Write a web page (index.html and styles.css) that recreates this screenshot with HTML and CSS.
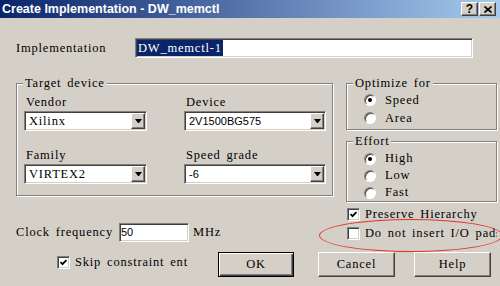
FILE: index.html
```html
<!DOCTYPE html>
<html lang="en">
<head>
  <meta charset="UTF-8">
  <title>Create Implementation - DW_memctl</title>
  <link rel="stylesheet" href="styles.css">
</head>
<body>
  <div class="window">
    <div class="titlebar">
      <span class="title">Create Implementation - DW_memctl</span>
      <div class="caption-buttons">
        <span class="cap-btn raised help-glyph">?</span>
        <span class="cap-btn raised">
          <svg width="8" height="7" viewBox="0 0 8 7"><path d="M0.5 0.5 L7.5 6.5 M7.5 0.5 L0.5 6.5" stroke="#000" stroke-width="1.7" fill="none"/></svg>
        </span>
      </div>
    </div>

    <div class="impl-row">
      <label class="impl-label">Implementation</label>
      <div class="impl-input sunken"><span class="sel">DW_memctl-1</span></div>
    </div>

    <div class="main">
      <div class="left-col">
        <div class="group target">
          <div class="group-title">Target device</div>
          <div class="target-grid">
            <div class="field-block">
              <div class="lbl">Vendor</div>
              <div class="combo sunken"><span class="combo-text">Xilinx</span><span class="drop raised"></span></div>
            </div>
            <div class="field-block">
              <div class="lbl">Device</div>
              <div class="combo sunken"><span class="combo-text sans">2V1500BG575</span><span class="drop raised"></span></div>
            </div>
            <div class="field-block">
              <div class="lbl">Family</div>
              <div class="combo sunken"><span class="combo-text">VIRTEX2</span><span class="drop raised"></span></div>
            </div>
            <div class="field-block">
              <div class="lbl">Speed grade</div>
              <div class="combo sunken"><span class="combo-text sans">-6</span><span class="drop raised"></span></div>
            </div>
          </div>
        </div>

        <div class="clock-row">
          <span class="clock-label">Clock frequency</span>
          <div class="clock-input sunken"><span class="sans">50</span></div>
          <span class="unit">MHz</span>
        </div>
      </div>

      <div class="right-col">
        <div class="group optimize">
          <div class="group-title">Optimize for</div>
          <div class="radio-list">
            <div class="radio-row"><span class="radio checked"></span>Speed</div>
            <div class="radio-row"><span class="radio"></span>Area</div>
          </div>
        </div>

        <div class="group effort">
          <div class="group-title">Effort</div>
          <div class="radio-list">
            <div class="radio-row"><span class="radio checked"></span>High</div>
            <div class="radio-row"><span class="radio"></span>Low</div>
            <div class="radio-row"><span class="radio"></span>Fast</div>
          </div>
        </div>

        <div class="checks">
          <div class="check-row">
            <span class="checkbox sunken">
              <svg width="7" height="7" viewBox="0 0 7 7"><polyline points="0.5,3 2.5,5.2 6.5,1" stroke="#000" stroke-width="1.8" fill="none"/></svg>
            </span>
            <span>Preserve Hierarchy</span>
          </div>
          <div class="check-row">
            <span class="checkbox sunken"></span>
            <span>Do not insert I/O pads</span>
          </div>
        </div>
      </div>
    </div>

    <div class="footer">
      <div class="skip">
        <span class="checkbox sunken">
          <svg width="7" height="7" viewBox="0 0 7 7"><polyline points="0.5,3 2.5,5.2 6.5,1" stroke="#000" stroke-width="1.8" fill="none"/></svg>
        </span>
        <span class="skip-label">Skip constraint entry</span>
      </div>
      <div class="btn default ok">OK</div>
      <div class="btn raised cancel">Cancel</div>
      <div class="btn raised help">Help</div>
    </div>

    <div class="annotation"></div>
  </div>
</body>
</html>
```

FILE: styles.css
```css
:root {
  --face: #d4d0c8;
  --shadow: #808080;
  --dark: #404040;
  --light: #fff;
  --select: #0a246a;
}

* {
  box-sizing: border-box;
}

body {
  margin: 0;
  width: 500px;
  height: 286px;
  overflow: hidden;
  background: var(--face);
  font-family: "Liberation Serif", "Times New Roman", serif;
  font-size: 12.5px;
  letter-spacing: 0.8px;
  word-spacing: 2px;
  color: #000;
}

.window {
  position: relative;
  height: 286px;
  overflow: hidden;
}

/* 3d borders */
.raised {
  background: var(--face);
  border: 1px solid;
  border-color: var(--light) var(--dark) var(--dark) var(--light);
  box-shadow: inset -1px -1px 0 var(--shadow);
}

.sunken {
  background: #fff;
  border: 1px solid;
  border-color: var(--shadow) var(--light) var(--light) var(--shadow);
  box-shadow: inset 1px 1px 0 var(--dark), inset -1px -1px 0 var(--face);
  padding: 1px;
}

.sans {
  font-family: "Liberation Sans", Arial, sans-serif;
  font-size: 11px;
  letter-spacing: 0;
  word-spacing: 0;
}

/* title bar */
.titlebar {
  height: 18px;
  display: flex;
  align-items: center;
  justify-content: space-between;
  padding: 0 4px 0 2px;
  background: linear-gradient(to right, #0a246a, #a6caf0);
}

.title {
  font-family: "Liberation Sans", Arial, sans-serif;
  font-weight: bold;
  font-size: 12.5px;
  letter-spacing: 0;
  word-spacing: 0;
  line-height: 18px;
  color: #fff;
}

.caption-buttons {
  display: flex;
  gap: 1px;
}

.cap-btn {
  width: 17px;
  height: 14px;
  display: flex;
  align-items: center;
  justify-content: center;
}

.help-glyph {
  font-family: "Liberation Sans", Arial, sans-serif;
  font-weight: bold;
  font-size: 12px;
  letter-spacing: 0;
  line-height: 12px;
}

/* implementation name */
.impl-row {
  display: flex;
  align-items: center;
  height: 20px;
  margin-top: 20px;
  padding-left: 16px;
}

.impl-label {
  width: 119px;
}

.impl-input {
  width: 338px;
  height: 20px;
}

.sel {
  display: inline-block;
  height: 16px;
  line-height: 16px;
  padding: 0 1px 0 1px;
  background: var(--select);
  color: #fff;
}

/* main area */
.main {
  display: flex;
  align-items: flex-start;
  margin-top: 25px;
  padding-left: 16px;
}

.left-col {
  width: 317px;
}

.right-col {
  width: 151px;
  margin-left: 13px;
}

.group {
  border: 1px solid var(--shadow);
  box-shadow: inset 1px 1px 0 var(--light), 1px 1px 0 var(--light);
}

.group-title {
  width: max-content;
  margin: -7px 0 0 6px;
  padding: 0 2px;
  line-height: 13px;
  background: var(--face);
}

.target-grid {
  display: grid;
  grid-template-columns: 123px 142px;
  column-gap: 37px;
  row-gap: 18px;
  margin: 6px 0 0 7px;
  padding-bottom: 11px;
}

.field-block {
  display: flex;
  flex-direction: column;
  gap: 3px;
}

.lbl {
  line-height: 12px;
  padding-left: 2px;
}

.combo {
  height: 20px;
  display: flex;
  align-items: center;
  justify-content: space-between;
}

.combo-text {
  padding-left: 3px;
  line-height: 16px;
}

.drop {
  width: 14px;
  height: 16px;
  display: flex;
  align-items: center;
  justify-content: center;
}

.drop::after {
  content: "";
  width: 1px;
  height: 0;
  border-left: 3px solid transparent;
  border-right: 3px solid transparent;
  border-top: 4px solid #000;
}

.clock-row {
  display: flex;
  align-items: center;
  height: 19px;
  margin-top: 27px;
}

.clock-label {
  width: 103px;
}

.clock-input {
  width: 70px;
  height: 19px;
  line-height: 15px;
}

.unit {
  margin-left: 4px;
}

/* radios */
.radio-list {
  padding: 1px 0 2px 17px;
}

.effort {
  margin-top: 11px;
}

.effort .radio-list {
  padding-top: 2px;
  padding-bottom: 0;
}

.radio-row {
  display: flex;
  align-items: center;
  gap: 9px;
  height: 18px;
}

.effort .radio-row {
  height: 17px;
}

.radio {
  width: 12px;
  height: 12px;
  border-radius: 50%;
  background: #fff;
  border: 1px solid;
  border-color: var(--shadow) var(--light) var(--light) var(--shadow);
  box-shadow: inset 1px 1px 0 var(--dark);
  display: flex;
  align-items: center;
  justify-content: center;
}

.radio.checked::after {
  content: "";
  width: 4px;
  height: 4px;
  border-radius: 50%;
  background: #000;
}

/* checkboxes */
.checks {
  margin-top: 3px;
}

.check-row {
  display: flex;
  align-items: center;
  gap: 5px;
  height: 19px;
  padding-left: 1px;
  white-space: nowrap;
  overflow: hidden;
}

.checkbox {
  flex: none;
  width: 13px;
  height: 13px;
  display: flex;
  align-items: center;
  justify-content: center;
  padding: 0;
}

/* footer */
.footer {
  display: flex;
  align-items: flex-start;
  height: 25px;
  margin-top: 9px;
  padding-left: 57px;
}

.skip {
  display: flex;
  align-items: center;
  gap: 5px;
  margin-top: 3px;
}

.skip-label {
  width: 113px;
  overflow: hidden;
  white-space: nowrap;
}

.btn {
  height: 25px;
  display: flex;
  align-items: center;
  justify-content: center;
}

.btn.default {
  width: 76px;
  margin-left: 30px;
  background: var(--face);
  border: 1px solid #000;
  box-shadow: inset 1px 1px 0 var(--light), inset -1px -1px 0 var(--dark), inset -2px -2px 0 var(--shadow);
}

.btn.cancel {
  width: 77px;
  margin-left: 24px;
}

.btn.help {
  width: 77px;
  margin-left: 19px;
}

/* red hand-drawn mark */
.annotation {
  position: absolute;
  left: 319px;
  top: 219px;
  width: 184px;
  height: 33px;
  border: 1px solid #e2342f;
  border-radius: 50%;
  pointer-events: none;
}
```
